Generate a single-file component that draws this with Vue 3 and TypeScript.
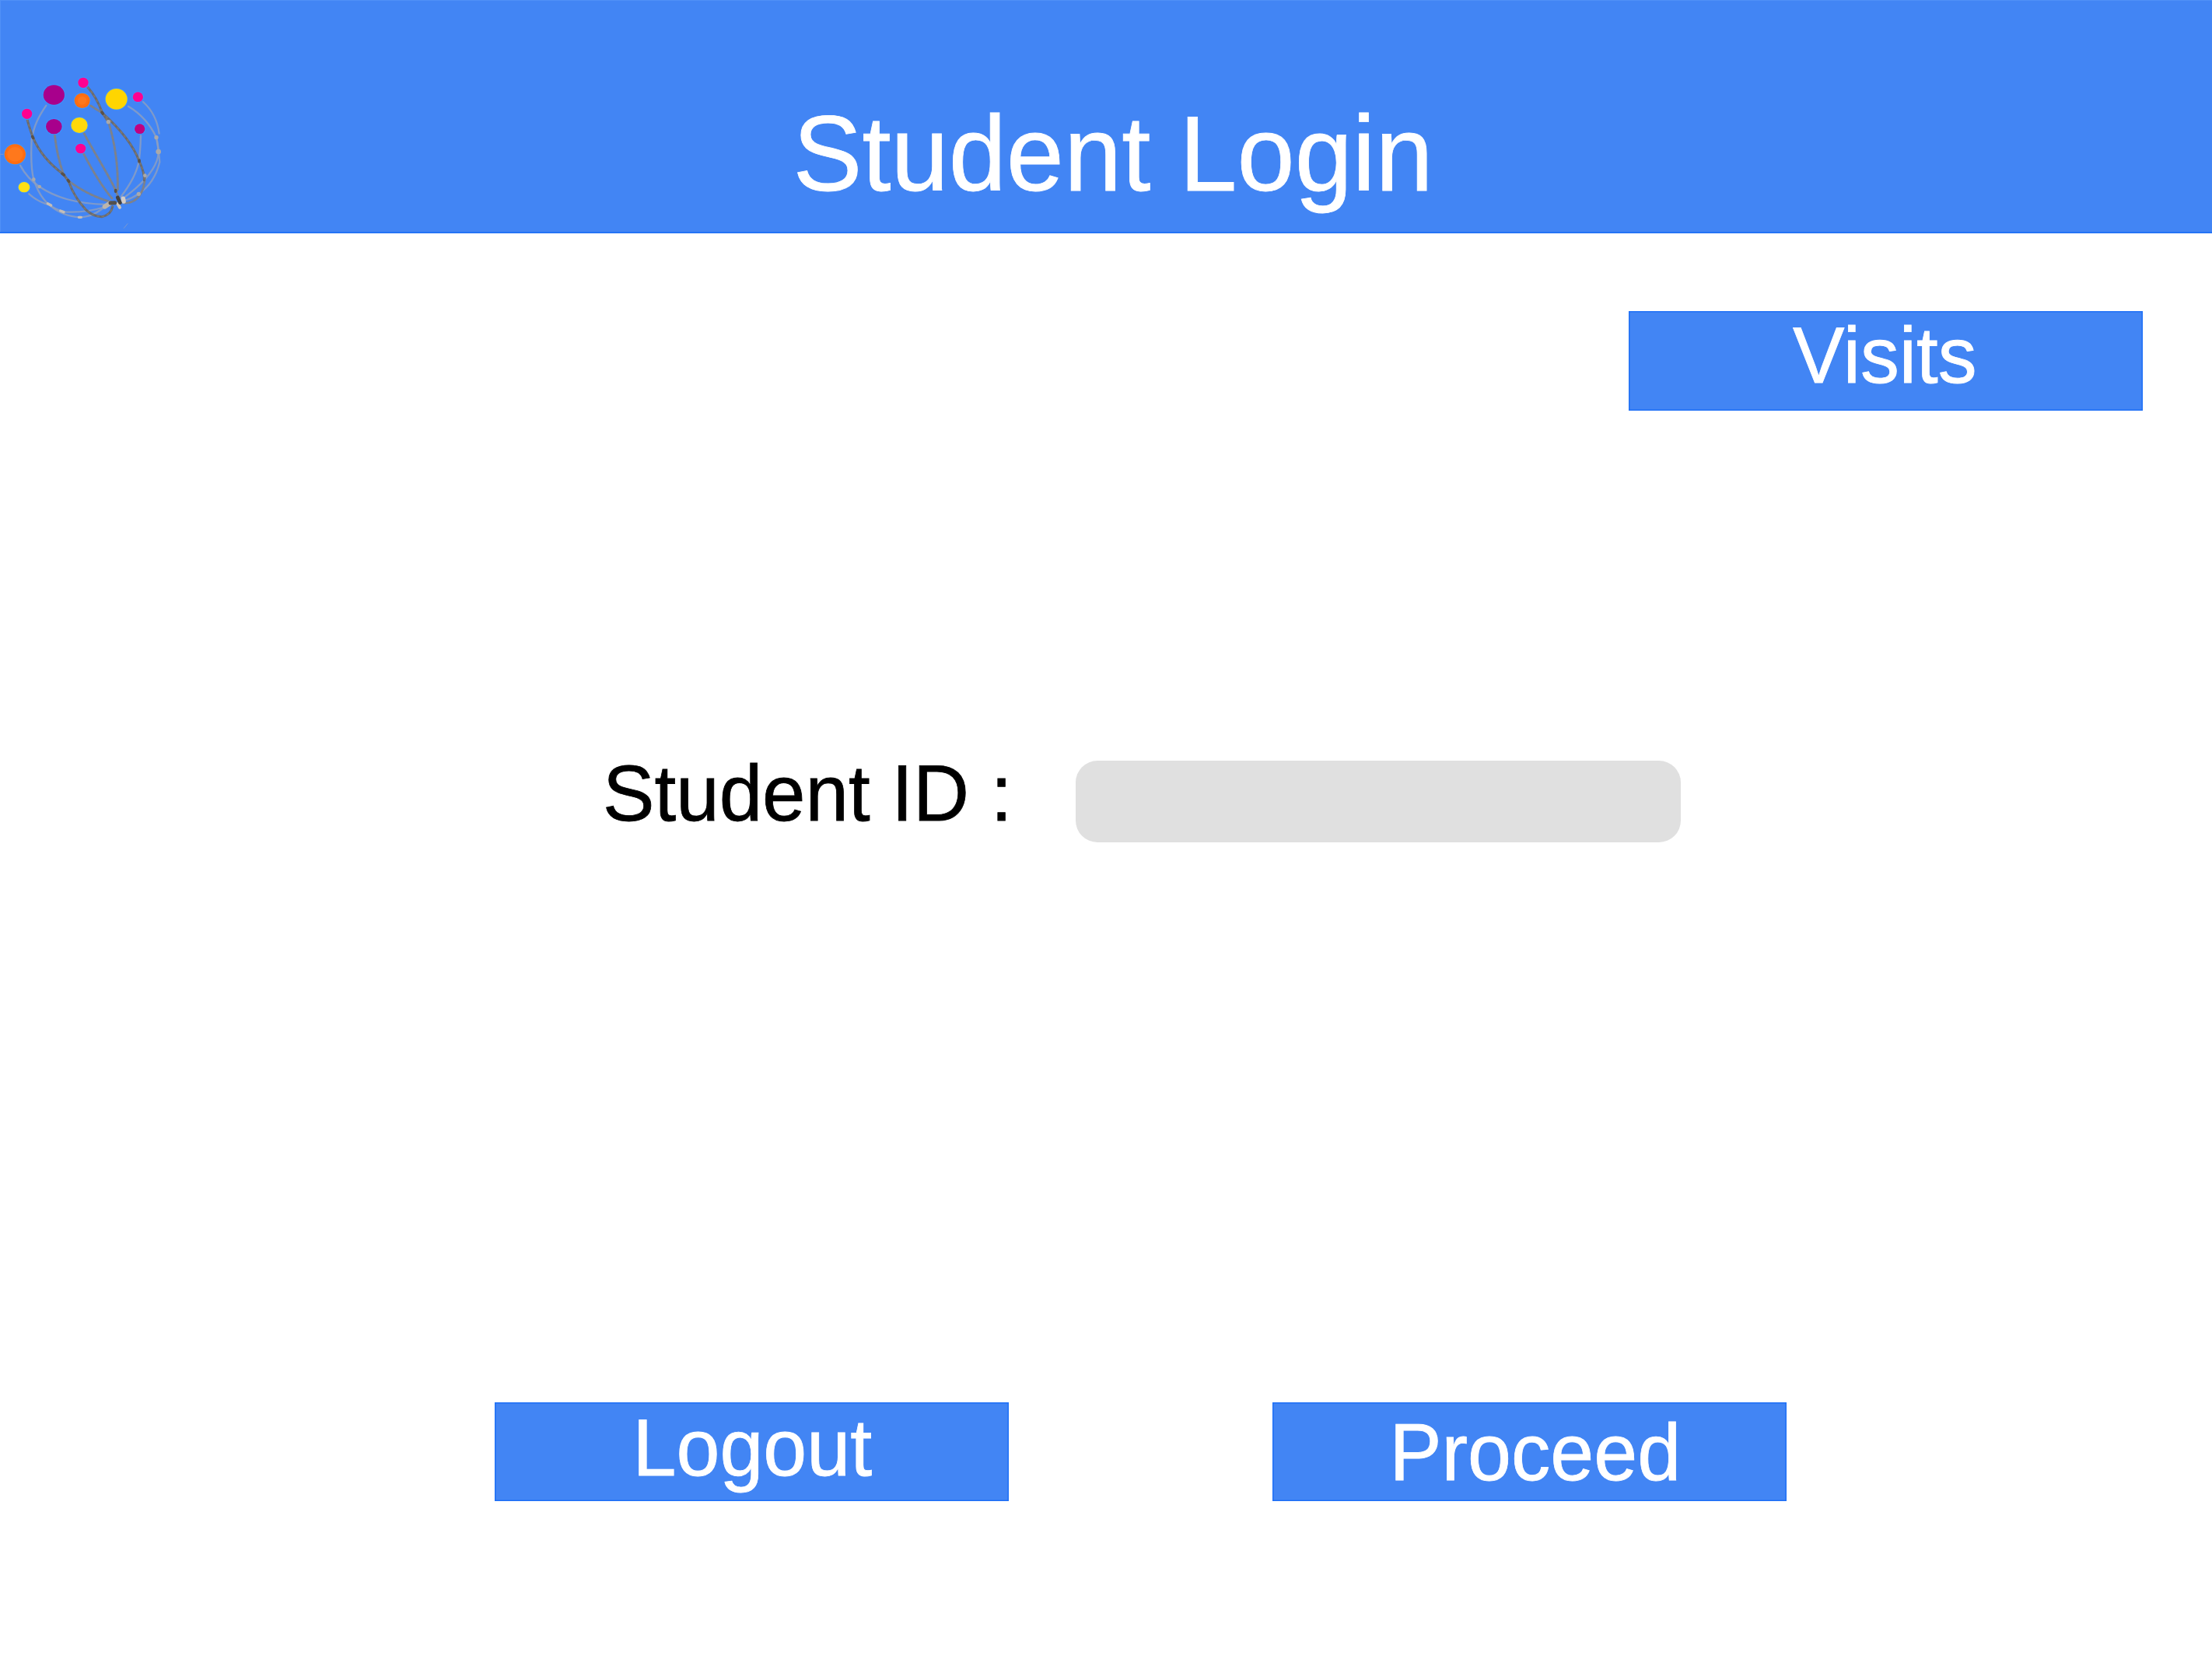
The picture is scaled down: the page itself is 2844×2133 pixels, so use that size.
<script setup lang="ts">
interface Dot {
  x: number
  y: number
  rx: number
  ry: number
  fill: string
}

const dots: Dot[] = [
  { x: 208, y: 126, rx: 41, ry: 38, fill: '#a8008c' },
  { x: 449, y: 142, rx: 42, ry: 40, fill: '#ffd500' },
  { x: 58, y: 355, rx: 41, ry: 39, fill: '#ff6d12' },
  { x: 317, y: 148, rx: 30, ry: 29, fill: '#ff6d12' },
  { x: 208, y: 248, rx: 31, ry: 29, fill: '#a8008c' },
  { x: 306, y: 243, rx: 32, ry: 30, fill: '#ffd90a' },
  { x: 93, y: 482, rx: 22, ry: 20, fill: '#ffe014' },
  { x: 539, y: 257, rx: 20, ry: 19, fill: '#c00080' },
  { x: 321, y: 79, rx: 20, ry: 20, fill: '#ff0090' },
  { x: 532, y: 134, rx: 20, ry: 19, fill: '#ff0090' },
  { x: 104, y: 199, rx: 20, ry: 20, fill: '#ff0090' },
  { x: 311, y: 333, rx: 20, ry: 19, fill: '#ff0090' },
]

const paleStems: string[] = [
  'M178 167C150 208 130 245 122 300C119 360 119 410 130 452C145 500 165 528 187 548Q215 568 246 577',
  'M78 398C95 430 115 455 152 480C215 522 290 545 410 549',
  'M112 508C145 538 170 545 190 550C230 585 270 596 309 598C355 596 382 575 412 552',
  'M246 577C305 581 350 575 405 558',
  'M495 170C545 200 580 240 603 290C612 325 615 355 605 380C585 435 530 485 475 525',
  'M552 153C588 185 608 230 614 275',
  'M603 290L612 345L616 385C600 450 565 488 535 508C510 525 494 530 475 534',
  'M543 283C542 325 540 360 534 390C524 435 500 475 467 518',
]

const midStems: string[] = [
  'M211 280C217 335 228 385 244 430L264 458',
  'M264 458C310 492 360 520 430 540',
  'M350 168Q375 184 395 196',
  'M418 230C440 300 456 390 454 492',
  'M323 272C360 345 415 425 447 496L460 530',
  'M322 352C355 415 390 475 432 525',
  'M480 543C525 545 560 505 559 435',
]

const darkStems: string[] = [
  'M105 220C112 250 120 270 127 290C150 345 190 392 244 432L264 458',
  'M264 458C280 505 305 540 330 568C350 587 370 595 393 596C415 591 430 580 434 557',
  'M338 96C360 120 380 155 395 196L418 230',
  'M395 196C450 245 510 310 537 381C550 410 558 432 556 455',
]
</script>

<template>
  <main class="page">
    <header class="top">
      <svg class="logo" viewBox="0 0 690 660" aria-hidden="true">
        <g fill="none" stroke-linecap="round">
          <path v-for="d in paleStems" :key="d" :d="d" stroke="#8f9fbf" stroke-width="7" opacity=".8" />
          <path v-for="d in midStems" :key="d" :d="d" stroke="#70809f" stroke-width="9" />
          <path v-for="d in midStems" :key="'g' + d" :d="d" stroke="#858380" stroke-width="5" stroke-dasharray="9 11" />
          <path v-for="d in darkStems" :key="d" :d="d" stroke="#686a70" stroke-width="9" />
          <path v-for="d in darkStems" :key="'g' + d" :d="d" stroke="#827b71" stroke-width="4" stroke-dasharray="8 12" />
        </g>
        <g fill="#aaa9a9">
          <circle cx="603" cy="290" r="8" />
          <circle cx="611" cy="345" r="10" />
          <circle cx="559" cy="437" r="7" />
          <circle cx="535" cy="508" r="8" />
          <circle cx="130" cy="452" r="7" />
          <circle cx="152" cy="480" r="7" />
          <circle cx="418" cy="230" r="8" />
        </g>
        <g fill="none" stroke-linecap="round">
          <path d="M184 545L197 552M233 573L246 578M304 598H313" stroke="#c4beb8" stroke-width="10" />
          <path d="M404 557L422 545" stroke="#bcb5ac" stroke-width="18" />
          <path d="M475 526L477 537" stroke="#d5cdc6" stroke-width="17" />
          <path d="M454 546L462 560" stroke="#cfc4b8" stroke-width="12" />
          <path d="M426 543L443 542" stroke="#54504c" stroke-width="15" />
          <path d="M454 522L463 542" stroke="#45413e" stroke-width="14" />
          <path d="M446 494V499M240 430L247 435M262 455L266 460M393 193L397 198M537 378V383M125 287L128 292" stroke="#5a5148" stroke-width="11" />
          <path d="M478 640L492 623M0 355H12" stroke="#7a98d2" stroke-width="3" />
        </g>
        <ellipse v-for="(dot, i) in dots" :key="i" :cx="dot.x" :cy="dot.y" :rx="dot.rx" :ry="dot.ry" :fill="dot.fill" stroke="#3c94ff" stroke-width="6" paint-order="stroke" />
        <ellipse cx="58" cy="355" rx="30" ry="28" fill="#ff781c" />
        <ellipse cx="317" cy="148" rx="17" ry="16" fill="#ff781c" />
      </svg>
      <h1 class="text">Student Login</h1>
    </header>
    <nav class="nav">
      <button class="visits" type="button"><span class="text">Visits</span></button>
    </nav>
    <form class="field" @submit.prevent>
      <label class="text" for="student-id">Student ID :</label>
      <input id="student-id" type="text" />
    </form>
    <div class="actions">
      <button class="logout" type="button"><span class="text">Logout</span></button>
      <button class="proceed" type="button"><span class="text">Proceed</span></button>
    </div>
  </main>
</template>

<style scoped>
.page {
  height: 2133px;
  overflow: hidden;
  background: #fff;
  font-family: "Liberation Sans", Arial, sans-serif;
}
.text {
  display: block;
  margin: 0;
  line-height: 1;
  font-weight: 400;
  white-space: pre;
  -webkit-text-stroke: 0.8px currentColor;
  transform: scaleY(1.025);
  transform-origin: 0 84.65%;
}
.top {
  display: flex;
  align-items: flex-start;
  height: 299.5px;
  box-sizing: border-box;
  background: #4285f4;
  box-shadow: inset 0 -2px #2474f5, inset 1px 1px #5090f6;
}
.logo {
  flex: none;
  width: 230px;
  height: 220px;
  margin-top: 80px;
}
h1 {
  color: #fff;
  font-size: 133.4px;
}
h1.text {
  margin: 131.5px 0 0 789.5px;
}
.nav {
  display: flex;
  justify-content: flex-end;
  padding: 100.5px 89px 0 0;
}
button {
  display: flex;
  align-items: flex-start;
  width: 661px;
  height: 127.5px;
  box-sizing: border-box;
  border: 0;
  background: #4285f4;
  box-shadow: inset 0 0 0 1.5px #1f70f6;
  color: #fff;
  font: 100.6px "Liberation Sans", Arial, sans-serif;
}
.visits {
  padding: 7.5px 0 0 211px;
  font-size: 99.8px;
}
.logout {
  padding: 9px 0 0 177.5px;
}
.proceed {
  padding: 15px 0 0 150.5px;
}
.field {
  display: flex;
  align-items: flex-start;
  margin: 450px 0 0 775px;
}
label {
  flex: none;
  width: 608px;
  font-size: 99.7px;
  color: #000;
}
label.text {
  margin-top: -7px;
}
input {
  width: 778px;
  height: 105.5px;
  box-sizing: border-box;
  padding: 0 28px;
  border: 0;
  border-radius: 28px;
  outline: 0;
  background: #e0e0e0;
  font: 72px "Liberation Sans", Arial, sans-serif;
}
.actions {
  display: flex;
  gap: 339px;
  margin: 719.5px 0 0 636px;
}
</style>

<style>
body {
  margin: 0;
}
</style>
